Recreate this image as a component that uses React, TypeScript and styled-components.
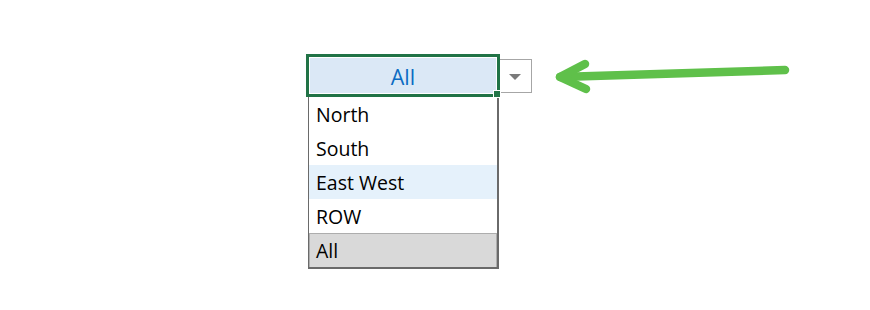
import React from 'react'
import styled, { createGlobalStyle } from 'styled-components'

const GlobalStyle = createGlobalStyle`
  html, body {
    margin: 0;
    padding: 0;
    background: #ffffff;
  }
  body {
    font-family: "Open Sans", "Noto Sans", "Liberation Sans", sans-serif;
  }
`

const Page = styled.div`
  display: flex;
  align-items: flex-start;
  padding: 54px 0 0 306px;
  width: 870px;
  height: 310px;
  box-sizing: border-box;
`

const Combo = styled.div`
  display: flex;
  flex-direction: column;
  width: 226px;
`

const CellRow = styled.div`
  display: flex;
  align-items: flex-start;
`

const Cell = styled.div`
  position: relative;
  width: 194px;
  height: 43px;
  box-sizing: border-box;
  border: 3px solid #217346;
  background: #dbe8f6;
  box-shadow: inset 0 0 0 1px #ffffff;
  display: flex;
  align-items: center;
  justify-content: center;
  color: #0b6bc3;
  font-size: 21.5px;
  padding-top: 1px;
`

const FillHandle = styled.span`
  position: absolute;
  right: -4px;
  bottom: -4px;
  width: 6px;
  height: 6px;
  background: #217346;
  border: 1px solid #ffffff;
`

const DropButton = styled.div`
  width: 34px;
  height: 34px;
  margin: 5px 0 0 -2px;
  box-sizing: border-box;
  border: 1px solid #a6a6a6;
  background: #ffffff;
  display: flex;
  align-items: center;
  justify-content: center;
`

const Triangle = styled.span`
  width: 0;
  height: 0;
  border-left: 6px solid transparent;
  border-right: 6px solid transparent;
  border-top: 6px solid #7a7a7a;
  margin-top: 1px;
`

const Menu = styled.div`
  width: 191px;
  margin-left: 2px;
  box-sizing: border-box;
  border-left: 1px solid #6a6a6a;
  border-right: 2px solid #6a6a6a;
  border-bottom: 2px solid #6a6a6a;
  background: #ffffff;
  display: flex;
  flex-direction: column;
`

const Item = styled.div<{ $hover?: boolean; $selected?: boolean }>`
  height: 34px;
  box-sizing: border-box;
  padding-left: 6px;
  display: flex;
  align-items: center;
  font-size: 19.5px;
  color: #000000;
  background: ${props => props.$selected ? '#d9d9d9' : props.$hover ? '#e5f1fb' : '#ffffff'};
  border: 1px solid ${props => props.$selected ? '#adadad' : 'transparent'};
  border-bottom-width: ${props => props.$selected ? '0' : '1px'};
`

const Arrow = styled.svg`
  margin: 1px 0 0 14px;
  flex: none;
`

const items = ['North', 'South', 'East West', 'ROW', 'All']

const App: React.FC = () => {
  return (
    <>
      <GlobalStyle />
      <Page>
        <Combo>
          <CellRow>
            <Cell>
              All
              <FillHandle />
            </Cell>
            <DropButton>
              <Triangle />
            </DropButton>
          </CellRow>
          <Menu>
            {
              items.map(name => (
                <Item
                  key={name}
                  $hover={name === 'East West'}
                  $selected={name === 'All'}
                >
                  {name}
                </Item>
              ))
            }
          </Menu>
        </Combo>
        <Arrow width="250" height="44" viewBox="0 0 250 44">
          <g
            fill="none"
            stroke="#5fc04a"
            strokeWidth="8.5"
            strokeLinecap="round"
            strokeLinejoin="round"
          >
            <path d="M239 15 L14 22" />
            <path d="M39 9 L14 22 L40 34" />
          </g>
        </Arrow>
      </Page>
    </>
  )
}

export default App
